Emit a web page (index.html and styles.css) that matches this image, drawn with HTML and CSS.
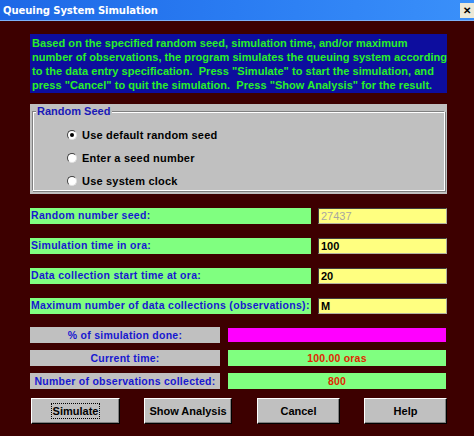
FILE: index.html
```html
<!DOCTYPE html>
<html>
<head>
<meta charset="utf-8">
<link rel="stylesheet" href="styles.css">
</head>
<body>
<div class="window">
  <div class="titlebar">
    <span class="title">Queuing System Simulation</span>
    <span class="close">✕</span>
  </div>
  <div class="content">
    <div class="intro">Based on the specified random seed, simulation time, and/or maximum<br>number of observations, the program simulates the queuing system according<br>to the data entry specification.&nbsp; Press "Simulate" to start the simulation, and<br>press "Cancel" to quit the simulation.&nbsp; Press "Show Analysis" for the result.</div>

    <div class="group">
      <div class="frame">
        <span class="legend">Random Seed</span>
        <div class="radio-row"><span class="radio checked"></span><span class="rlabel">Use default random seed</span></div>
        <div class="radio-row"><span class="radio"></span><span class="rlabel">Enter a seed number</span></div>
        <div class="radio-row"><span class="radio"></span><span class="rlabel">Use system clock</span></div>
      </div>
    </div>

    <div class="fields">
      <div class="flabel">Random number seed:</div><div class="fvalue dim">27437</div>
      <div class="flabel">Simulation time in ora:</div><div class="fvalue">100</div>
      <div class="flabel">Data collection start time at ora:</div><div class="fvalue">20</div>
      <div class="flabel">Maximum number of data collections (observations):</div><div class="fvalue">M</div>
    </div>

    <div class="status">
      <div class="slabel">% of simulation done:</div><div class="svalue progress"></div>
      <div class="slabel">Current time:</div><div class="svalue">100.00 oras</div>
      <div class="slabel">Number of observations collected:</div><div class="svalue">800</div>
    </div>

    <div class="buttons">
      <div class="btn b1"><span class="focus">Simulate</span></div>
      <div class="btn b2">Show Analysis</div>
      <div class="btn b3">Cancel</div>
      <div class="btn b4">Help</div>
    </div>
  </div>
</div>
</body>
</html>
```

FILE: styles.css
```css
html, body {
  margin: 0;
  padding: 0;
}
body {
  width: 474px;
  height: 436px;
  overflow: hidden;
  background: #3d0000;
  font-family: "Liberation Sans", Arial, sans-serif;
}
.window {
  width: 474px;
  height: 436px;
  display: flex;
  flex-direction: column;
}
.titlebar {
  height: 20px;
  border-bottom: 1px solid #7fb2f8;
  background: linear-gradient(to right, #1d68e6 0%, #2a7cf2 50%, #3a90fa 100%);
  display: flex;
  align-items: center;
  justify-content: space-between;
  padding-left: 3px;
}
.title {
  color: #ffffff;
  font-family: "DejaVu Sans Condensed", "DejaVu Sans", sans-serif;
  font-weight: bold;
  font-size: 11.2px;
  letter-spacing: -0.1px;
}
.close {
  width: 14px;
  height: 15px;
  background: #ece8d6;
  color: #000;
  font-size: 10px;
  font-weight: bold;
  display: flex;
  align-items: center;
  justify-content: center;
  margin-top: 1px;
}
.content {
  padding: 13px 27px 0 30px;
  display: flex;
  flex-direction: column;
}
.intro {
  height: 59px;
  box-sizing: border-box;
  background: #0d0d9e;
  color: #28f028;
  font-size: 11px;
  font-weight: bold;
  line-height: 14px;
  padding: 2px 0 0 2px;
  letter-spacing: 0.05px;
  white-space: nowrap;
  overflow: hidden;
}
.group {
  margin-top: 11px;
  height: 90px;
  background: #c0c0c0;
  box-sizing: border-box;
  padding: 7px 2px 3px 2px;
}
.frame {
  position: relative;
  height: 100%;
  box-sizing: border-box;
  border-top: 1px solid #808080;
  border-left: 1px solid #808080;
  border-right: 1px solid #ffffff;
  border-bottom: 1px solid #ffffff;
  box-shadow: inset 1px 1px 0 #ffffff, 1px 1px 0 #808080;
  padding: 11px 0 0 34px;
}
.legend {
  position: absolute;
  top: -7px;
  left: 3px;
  background: #c0c0c0;
  color: #1a1ab8;
  font-size: 11px;
  font-weight: bold;
  padding: 0 2px 0 1px;
  line-height: 12px;
}
.radio-row {
  height: 23px;
  display: flex;
  align-items: center;
}
.radio {
  width: 10px;
  height: 10px;
  border-radius: 50%;
  background: #ffffff;
  border: 1px solid #404040;
  border-right-color: #e0e0e0;
  border-bottom-color: #e0e0e0;
  box-sizing: border-box;
  position: relative;
  margin-right: 5px;
}
.radio.checked::after {
  content: "";
  position: absolute;
  left: 2px;
  top: 2px;
  width: 4px;
  height: 4px;
  border-radius: 50%;
  background: #000;
}
.rlabel {
  font-size: 11px;
  font-weight: bold;
  color: #000;
  letter-spacing: 0.2px;
}
.fields {
  margin-top: 14px;
  display: grid;
  grid-template-columns: 281px 129px;
  column-gap: 7px;
  row-gap: 14px;
}
.flabel {
  height: 16px;
  background: #80ff80;
  color: #1818d0;
  font-size: 10.5px;
  font-weight: bold;
  line-height: 15px;
  padding-left: 1px;
  white-space: nowrap;
  letter-spacing: 0.3px;
}
.fvalue {
  height: 16px;
  box-sizing: border-box;
  background: #ffff80;
  border: 1px solid #404040;
  border-right-color: #b0b0a0;
  border-bottom-color: #b0b0a0;
  color: #000;
  font-size: 11px;
  font-weight: bold;
  line-height: 14px;
  padding-left: 2px;
}
.fvalue.dim {
  color: #a8a8a0;
  font-weight: normal;
}
.status {
  margin-top: 13px;
  display: grid;
  grid-template-columns: 190px 218px;
  column-gap: 8px;
  row-gap: 7px;
}
.slabel {
  height: 16px;
  background: #c0c0c0;
  color: #1818d0;
  font-size: 10.5px;
  font-weight: bold;
  line-height: 16px;
  text-align: center;
  white-space: nowrap;
  letter-spacing: 0.25px;
}
.svalue {
  height: 16px;
  background: #80ff80;
  color: #e02800;
  font-size: 10.5px;
  font-weight: bold;
  line-height: 16px;
  text-align: center;
  letter-spacing: 0.2px;
}
.svalue.progress {
  background: #ff00ff;
  margin-top: 1px;
  height: 14px;
}
.buttons {
  margin-top: 9px;
  display: flex;
}
.btn {
  height: 26px;
  box-sizing: border-box;
  background: #c0c0c0;
  border-top: 1px solid #ffffff;
  border-left: 1px solid #ffffff;
  border-right: 1px solid #000000;
  border-bottom: 1px solid #000000;
  box-shadow: inset -1px -1px 0 #808080;
  display: flex;
  align-items: center;
  justify-content: center;
  font-size: 11px;
  font-weight: bold;
  color: #000;
}
.b1 { width: 89px; margin-left: 1px; }
.b2 { width: 88px; margin-left: 24px; }
.b3 { width: 83px; margin-left: 25px; }
.b4 { width: 83px; margin-left: 24px; }
.focus {
  border: 1px dotted #000;
  padding: 1px 1px;
  line-height: 12px;
}
```
